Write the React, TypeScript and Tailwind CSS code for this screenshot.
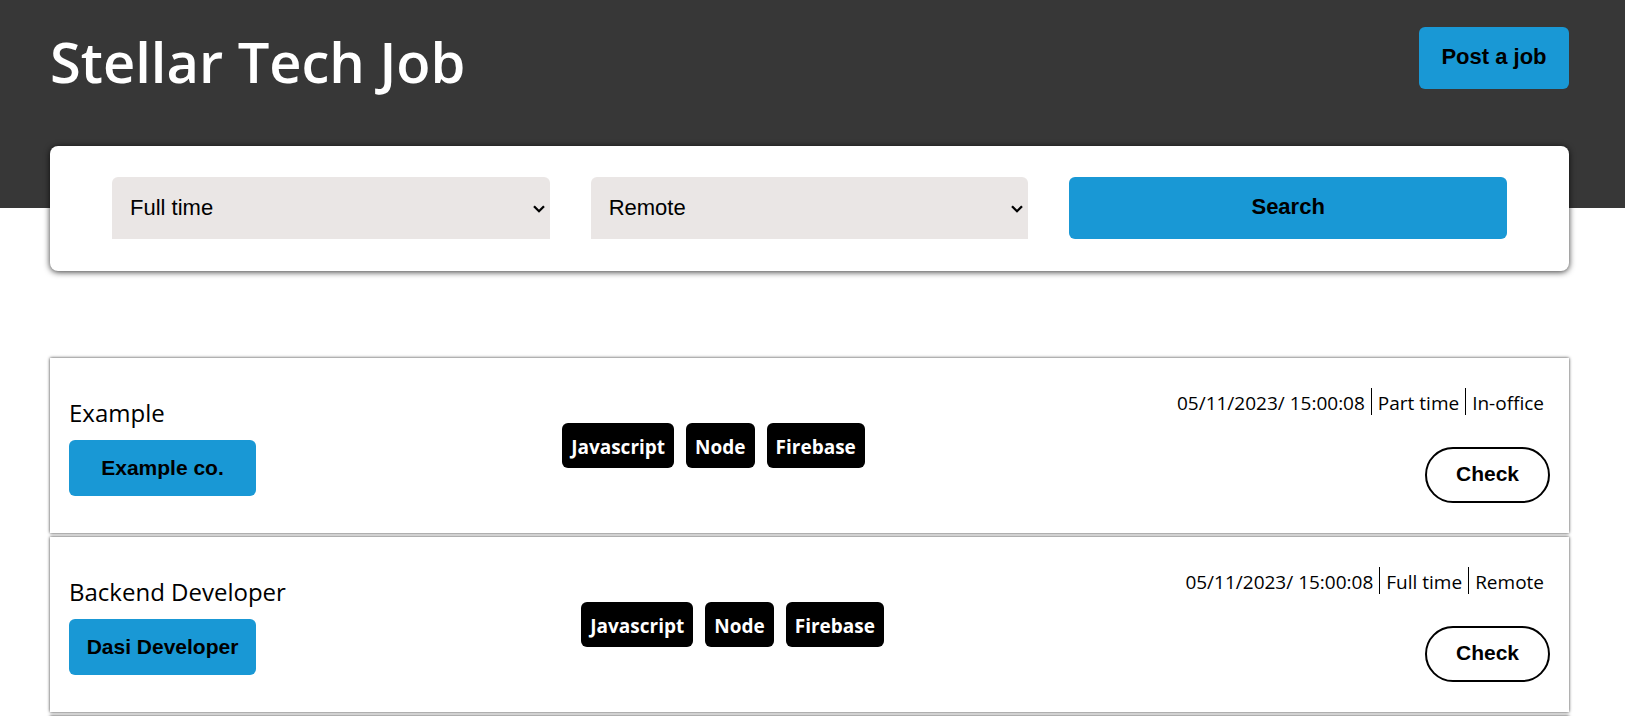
type Job = {
  title: string;
  company: string;
  skills: string[];
  postedOn: string;
  type: string;
  location: string;
};

const skills = ["Javascript", "Node", "Firebase"];

const jobs: Job[] = [
  {
    title: "Example",
    company: "Example co.",
    skills,
    postedOn: "05/11/2023/ 15:00:08",
    type: "Part time",
    location: "In-office",
  },
  {
    title: "Backend Developer",
    company: "Dasi Developer",
    skills,
    postedOn: "05/11/2023/ 15:00:08",
    type: "Full time",
    location: "Remote",
  },
];

const sans = "font-['Liberation_Sans',Arial,sans-serif]";
const primary = `${sans} rounded-md bg-[#1998d5] font-bold text-black`;

function Header() {
  return (
    <header className="flex items-start justify-between bg-[#373737] pt-[27px] pr-14 pb-[113px] pl-[50px]">
      <h1 className="text-[56px] leading-[68px] font-semibold text-white">Stellar Tech Job</h1>
      <button type="button" className={`${primary} h-[62px] w-[150px] pb-1 text-[22px]`}>
        Post a job
      </button>
    </header>
  );
}

function SelectField({ label, options }: { label: string; options: string[] }) {
  return (
    <div className="relative">
      <select
        aria-label={label}
        defaultValue={options[0]}
        className={`${sans} h-[62px] w-full appearance-none rounded-t-md bg-[#eae6e5] pb-0.5 pl-[18px] text-[22px] text-black`}
      >
        {options.map((option) => (
          <option key={option}>{option}</option>
        ))}
      </select>
      <svg
        viewBox="0 0 12 8"
        className="pointer-events-none absolute top-7 right-[5px] h-2 w-3"
        fill="none"
        stroke="black"
        strokeWidth="2.3"
        aria-hidden="true"
      >
        <path d="M1 1.2 L6 6.2 L11 1.2" />
      </svg>
    </div>
  );
}

function SearchBar() {
  return (
    <form
      onSubmit={(event) => event.preventDefault()}
      className="-mt-[62px] mr-14 ml-[50px] grid grid-cols-3 gap-[41px] rounded-lg bg-white px-[62px] pt-[31px] pb-8 shadow-[0_1px_6px_#000c]"
    >
      <SelectField label="Job type" options={["Full time", "Part time", "Contract"]} />
      <SelectField label="Job location" options={["Remote", "In-office"]} />
      <button type="submit" className={`${primary} h-[62px] pb-1 text-[22px]`}>
        Search
      </button>
    </form>
  );
}

function JobCard({ job }: { job: Job }) {
  return (
    <li className="flex h-[175px] items-center justify-between bg-white px-[19px] shadow-[0_0_3px_#000c]">
      <div className="flex flex-col items-start gap-[11px]">
        <h2 className="pt-px text-[24px] leading-[33px]">{job.title}</h2>
        <button type="button" className={`${primary} h-14 w-[187px] text-[21px]`}>
          {job.company}
        </button>
      </div>
      <ul className="flex gap-3">
        {job.skills.map((skill) => (
          <li
            key={skill}
            className="rounded-md bg-black px-[9px] pt-[11px] pb-[7px] text-[19px] leading-[27px] font-bold text-white"
          >
            {skill}
          </li>
        ))}
      </ul>
      <div className="flex flex-col items-end gap-8">
        <p className="flex divide-x divide-black text-[19px] leading-[23px]">
          <span className="px-1.5 pt-1">{job.postedOn}</span>
          <span className="px-1.5 pt-1">{job.type}</span>
          <span className="px-1.5 pt-1">{job.location}</span>
        </p>
        <button
          type="button"
          className={`${sans} h-14 w-[125px] rounded-full border-2 border-black bg-white pb-0.5 text-[21px] font-bold text-black`}
        >
          Check
        </button>
      </div>
    </li>
  );
}

export default function App() {
  return (
    <div className="min-h-screen bg-white font-['Open_Sans',sans-serif] text-black">
      <Header />
      <main>
        <SearchBar />
        <div className="mt-[87px] mr-14 ml-[50px] flex flex-col gap-1">
          <ul className="flex flex-col gap-1">
            {jobs.map((job) => (
              <JobCard key={job.title} job={job} />
            ))}
          </ul>
          <div className="h-4 bg-white shadow-[0_0_3px_#000c]" />
        </div>
      </main>
    </div>
  );
}
